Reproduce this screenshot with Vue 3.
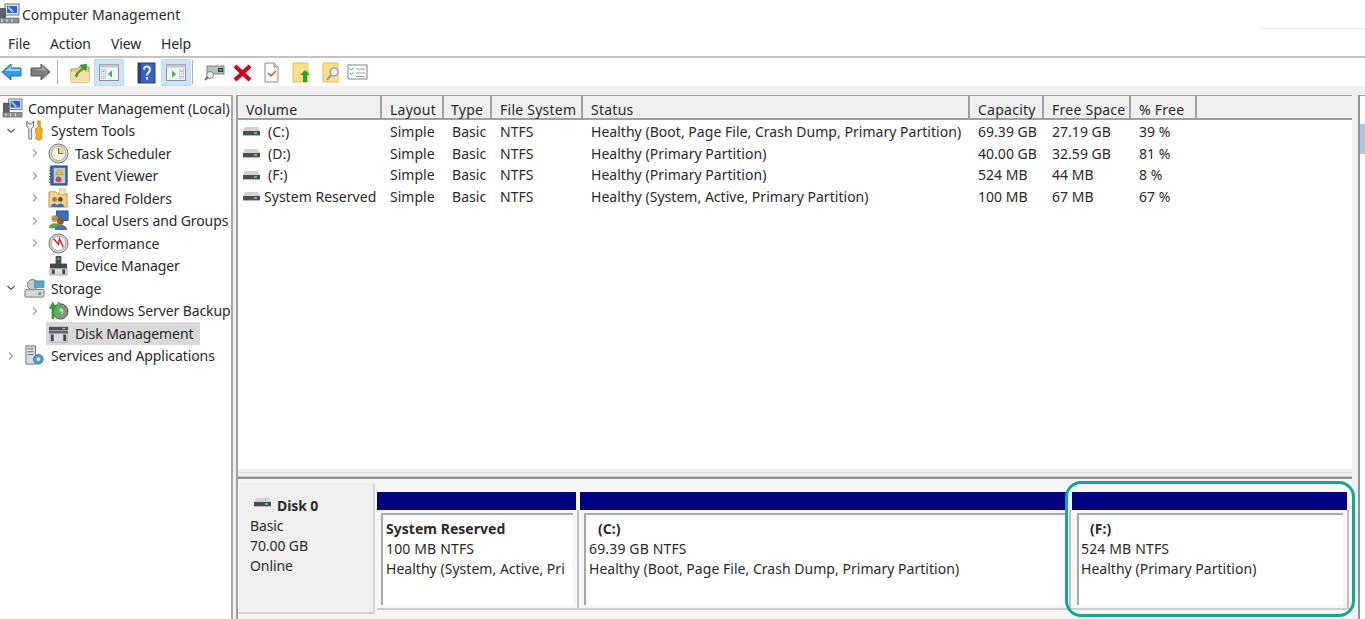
<script setup>
const icons = {
  computer: '<rect x="7" y="1" width="14" height="11" fill="#dfe3ea" stroke="#6d7480"/><rect x="9" y="3" width="10" height="7" fill="#2f62c4"/><path d="M10 4l5 5" stroke="#8fd0f5" stroke-width="2"/><rect x="1" y="5" width="7" height="11" fill="#5a6068"/><rect x="1" y="15" width="20" height="5" fill="#8b9098" stroke="#5a5e66" stroke-width=".6"/><path d="M4 16v3M9 16v3M14 16v3" stroke="#e6e9ee"/>',
  tools: '<path d="M3 1v6l2 2v11h3V9l2-2V1L8 4H5z" fill="#e8eaec" stroke="#6a6f76"/><path d="M14 1h3v6l1 2h1v4l-1 3 1 3-2 2h-3l-2-2 1-3-1-3V9h1l2-2z" fill="#f0b020" stroke="#a87810" stroke-width=".7"/>',
  clock: '<circle cx="11" cy="11" r="10" fill="#d4d5d6" stroke="#77736c"/><circle cx="11" cy="11" r="7.500" fill="#fbf8ee" stroke="#a8a59c"/><path d="M11 4.500a6.500 6.500 0 0 1 6.500 6.500H11z" fill="#f3cf90"/><path d="M11 5v6h5" fill="none" stroke="#8a6a30" stroke-width="1.200"/>',
  viewer: '<rect x="3" y="1" width="17" height="20" fill="#3d68a8" stroke="#27477c"/><path d="M1 3h3M1 6h3M1 9h3M1 12h3M1 15h3M1 18h3" stroke="#555"/><rect x="6" y="3" width="12" height="16" fill="#b9cbe4"/><path d="M12 4l4 6H8z" fill="#f2c230" stroke="#a07a10" stroke-width=".5"/><circle cx="11" cy="15" r="3" fill="#d04a3a"/>',
  shared: '<path d="M1 4h7l2 2h10v14H1z" fill="#f0d48a" stroke="#b8974a"/><path d="M12 1h6v6h-6z" fill="#f9e8b8" stroke="#b8974a" stroke-width=".6"/><circle cx="7" cy="12" r="2.500" fill="#a8744a"/><circle cx="13" cy="12" r="2.500" fill="#6b4a2a"/><path d="M3 20c0-5 7-5 7 0zM9 20c0-5 8-5 8 0z" fill="#3f6fb5"/>',
  users: '<rect x="9" y="1" width="12" height="10" fill="#3b6fc4" stroke="#2a4a85"/><circle cx="7" cy="9" r="3.500" fill="#c28a4e"/><path d="M1 19c0-7 12-7 12 0z" fill="#5fa04a"/><circle cx="13" cy="12" r="3.500" fill="#8a5a30"/><path d="M7 21c0-7 13-7 13 0z" fill="#4a6fb0"/>',
  perf: '<circle cx="11" cy="11" r="10" fill="#d4d5d6" stroke="#77736c"/><circle cx="11" cy="11" r="7.500" fill="#fff" stroke="#a8a59c"/><path d="M6 6l5 6 1-6 4 9" fill="none" stroke="#c6282a" stroke-width="1.500"/>',
  device: '<rect x="8" y="1" width="6" height="9" fill="#4a4e55"/><rect x="10" y="3" width="2" height="2" fill="#5fd05f"/><rect x="2" y="9" width="18" height="5" fill="#44484f"/><rect x="2" y="14" width="18" height="7" fill="#dadcdf" stroke="#80848a" stroke-width=".6"/><rect x="4" y="15" width="3" height="5" fill="#44484f"/><rect x="15" y="15" width="3" height="5" fill="#44484f"/>',
  storage: '<rect x="1" y="12" width="20" height="8" rx="1" fill="#d5d8dc" stroke="#777c84"/><circle cx="9" cy="7" r="5.500" fill="#c6cace" stroke="#777c84"/><rect x="11" y="3" width="10" height="7" fill="#58a7c9" stroke="#3a7e9c" stroke-width=".6"/><rect x="15" y="15" width="3" height="3" fill="#55b055"/>',
  backup: '<circle cx="13" cy="12" r="8" fill="#8b8f85" stroke="#4a4d48"/><circle cx="13" cy="12" r="3" fill="#d6d2c5"/><path d="M5 20V6M2 9l3-5 3 5" fill="none" stroke="#2ca02c" stroke-width="2.500"/><path d="M11 2v13M8 12l3 5 3-5" fill="none" stroke="#46c046" stroke-width="2.200"/>',
  disk: '<rect x="1" y="4" width="20" height="3.500" fill="#4b4f55"/><rect x="15" y="5" width="3" height="1.500" fill="#63e063"/><rect x="1" y="8" width="20" height="3" fill="#63676d"/><rect x="2" y="11" width="18" height="9" fill="#dcdee0" stroke="#888" stroke-width=".5"/><rect x="3" y="12" width="3" height="7" fill="#44484f"/><rect x="16" y="12" width="3" height="7" fill="#44484f"/>',
  services: '<rect x="2" y="1" width="10" height="19" fill="#d9dce0" stroke="#70757c"/><path d="M4 4h6M4 7h6M4 10h6" stroke="#70757c"/><circle cx="15" cy="15" r="5" fill="#5b9bd5" stroke="#3a6f9f"/><circle cx="15" cy="15" r="1.800" fill="#eaf3fb"/>',
  back: '<path d="M1 10l9-8v4h10v8H10v4z" fill="#3a9ae0" stroke="#1d6cb0"/><path d="M4 9l6-5v3h9v2z" fill="#9ad4f8"/>',
  forward: '<path d="M21 10l-9-8v4H2v8h10v4z" fill="#7c7c7c" stroke="#5a5a5a"/><path d="M3 7h10V4l5 5z" fill="#a8a8a8"/>',
  up: '<path d="M2 7h6l2-2h10v15H2z" fill="#ecd088" stroke="#b39345"/><path d="M2 10h18v10H2z" fill="#f4dfa4"/><path d="M6 14c2-5 5-6 7-8l-2-3 7-1-1 7-2-2c-3 2-6 4-7 8z" fill="#3d9b3a" stroke="#2b7a2b" stroke-width=".4"/>',
  paneLeft: '<rect x="1.500" y="2.500" width="19" height="16" fill="#f4f5f6" stroke="#8a8f95"/><rect x="1.500" y="2.500" width="19" height="3" fill="#c3c6ca"/><rect x="3.500" y="7.500" width="4" height="9" fill="#fff" stroke="#a9b9c8" stroke-width=".7"/><path d="M4.500 9.500h2M4.500 12h2M4.500 14.500h2" stroke="#5a9ad0"/><path d="M14 8.500v7l-4-3.500z" fill="#3cae58"/>',
  paneRight: '<rect x="1.500" y="2.500" width="19" height="16" fill="#f4f5f6" stroke="#8a8f95"/><rect x="1.500" y="2.500" width="19" height="3" fill="#c3c6ca"/><rect x="14.500" y="7.500" width="4" height="9" fill="#fff" stroke="#a9b9c8" stroke-width=".7"/><path d="M15.500 9.500h2M15.500 12h2M15.500 14.500h2" stroke="#5a9ad0"/><path d="M7 8.500v7l4-3.500z" fill="#3cae58"/>',
  help: '<rect x="1" y="1" width="17" height="20" fill="#3a62b8" stroke="#25408a"/><rect x="1" y="1" width="3" height="20" fill="#22408c"/><path d="M7 7.500c0-4 6-4 6 0 0 3-3 3-3 6" fill="none" stroke="#e6eeff" stroke-width="2"/><rect x="9" y="15" width="2" height="2.500" fill="#e6eeff"/>',
  connect: '<rect x="3" y="4" width="17" height="8" fill="#b9bfc6" stroke="#7c828a"/><rect x="14" y="6" width="5" height="4" fill="#33373c"/><rect x="15.500" y="7" width="2" height="2" fill="#63e063"/><circle cx="6" cy="13" r="3.500" fill="#e8f1f8" stroke="#7c828a"/><path d="M4 15l-3 3" stroke="#666" stroke-width="2"/>',
  del: '<path d="M3 4l15 14M18 4L3 18" stroke="#d0021b" stroke-width="4.200"/>',
  check: '<path d="M2 1h9l4 4v15H2z" fill="#fff" stroke="#8a8a8a"/><path d="M11 1v4h4" fill="#d8d8d8" stroke="#8a8a8a"/><path d="M5 11l3 3 5-5" fill="none" stroke="#b06a28" stroke-width="1.500"/>',
  yellowUp: '<rect x="1" y="1" width="15" height="19" fill="#fbe08a" stroke="#e8c24e"/><path d="M13 8l5 5h-3v7h-4v-7H8z" fill="#28a428"/>',
  yellowFind: '<rect x="1" y="1" width="15" height="19" fill="#fbe08a" stroke="#e8c24e"/><circle cx="12" cy="10" r="4" fill="#e9f1f8" stroke="#8b9299" stroke-width="1.200"/><path d="M9 13l-4 5" stroke="#8b9299" stroke-width="2"/>',
  list: '<rect x="1" y="3" width="19" height="14" fill="#f8f9fa" stroke="#80868c"/><path d="M3 6.500l1.500 1.500 2-2M3 11l1.500 1.500 2-2" fill="none" stroke="#3a8ad0"/><path d="M9 7h9M9 11h9M9 14.500h9" stroke="#a0a5ab" stroke-width="1.200"/>',
  vol: '<path d="M2 0h13l2 4H0z" fill="#cfd1d3"/><rect x="0" y="4" width="17" height="4" fill="#4a4d52"/><rect x="11" y="5" width="3" height="2" fill="#3fd060"/><rect x="0" y="8" width="17" height="1" fill="#b5b7b9"/>'
}

const toolbar = [
  { icon: 'back', cls: 'tb-back' }, { icon: 'forward', cls: 'tb-fwd' }, { sep: true, cls: 'tb-sep1' },
  { icon: 'up', cls: 'tb-up' }, { icon: 'paneLeft', active: true, cls: 'tb-pl' },
  { icon: 'help', cls: 'tb-help' }, { icon: 'paneRight', active: true, cls: 'tb-pr' }, { sep: true, cls: 'tb-sep2' },
  { icon: 'connect', cls: 'tb-conn' }, { icon: 'del', cls: 'tb-del' }, { icon: 'check', cls: 'tb-check' },
  { icon: 'yellowUp', cls: 'tb-yu' }, { icon: 'yellowFind', cls: 'tb-yf' }, { icon: 'list', cls: 'tb-list' }
]

const tree = [
  { label: 'Computer Management (Local)', icon: 'computer', level: 0 },
  { label: 'System Tools', icon: 'tools', level: 1, chev: 'open' },
  { label: 'Task Scheduler', icon: 'clock', level: 2, chev: 'closed' },
  { label: 'Event Viewer', icon: 'viewer', level: 2, chev: 'closed' },
  { label: 'Shared Folders', icon: 'shared', level: 2, chev: 'closed' },
  { label: 'Local Users and Groups', icon: 'users', level: 2, chev: 'closed' },
  { label: 'Performance', icon: 'perf', level: 2, chev: 'closed' },
  { label: 'Device Manager', icon: 'device', level: 2 },
  { label: 'Storage', icon: 'storage', level: 1, chev: 'open' },
  { label: 'Windows Server Backup', icon: 'backup', level: 2, chev: 'closed' },
  { label: 'Disk Management', icon: 'disk', level: 2, selected: true },
  { label: 'Services and Applications', icon: 'services', level: 1, chev: 'closed' }
]

const headers = ['Volume', 'Layout', 'Type', 'File System', 'Status', 'Capacity', 'Free Space', '% Free']
const rows = [
  ['(C:)', 'Simple', 'Basic', 'NTFS', 'Healthy (Boot, Page File, Crash Dump, Primary Partition)', '69.39 GB', '27.19 GB', '39 %'],
  ['(D:)', 'Simple', 'Basic', 'NTFS', 'Healthy (Primary Partition)', '40.00 GB', '32.59 GB', '81 %'],
  ['(F:)', 'Simple', 'Basic', 'NTFS', 'Healthy (Primary Partition)', '524 MB', '44 MB', '8 %'],
  ['System Reserved', 'Simple', 'Basic', 'NTFS', 'Healthy (System, Active, Primary Partition)', '100 MB', '67 MB', '67 %']
]

const partitions = [
  { name: 'System Reserved', size: '100 MB NTFS', status: 'Healthy (System, Active, Pri', cls: 'p-sys' },
  { name: '(C:)', size: '69.39 GB NTFS', status: 'Healthy (Boot, Page File, Crash Dump, Primary Partition)', cls: 'p-c', indent: true },
  { name: '(F:)', size: '524 MB NTFS', status: 'Healthy (Primary Partition)', cls: 'p-f', indent: true }
]
</script>

<template>
  <div class="app">
    <header class="titlebar">
      <svg class="title-icon" viewBox="0 0 22 22" v-html="icons.computer"></svg>
      <span>Computer Management</span>
      <i class="title-line"></i>
    </header>

    <nav class="menubar">
      <span v-for="m in ['File', 'Action', 'View', 'Help']" :key="m" :class="'m-' + m">{{ m }}</span>
    </nav>

    <div class="toolbar">
      <template v-for="(t, i) in toolbar" :key="i">
        <i v-if="t.sep" class="tb-sep" :class="t.cls"></i>
        <span v-else class="tb-btn" :class="[t.cls, { active: t.active }]">
          <svg viewBox="0 0 22 22" v-html="icons[t.icon]"></svg>
        </span>
      </template>
    </div>
    <div class="strip"></div>

    <main class="main">
      <aside class="tree">
        <div
          v-for="n in tree"
          :key="n.label"
          class="node"
          :class="'lv' + n.level"
        >
          <span class="chev">
            <svg v-if="n.chev === 'open'" viewBox="0 0 10 10"><path d="M1.500 3l3.500 3.500L8.500 3" fill="none" stroke="#555" stroke-width="1.200"/></svg>
            <svg v-else-if="n.chev === 'closed'" viewBox="0 0 10 10"><path d="M3 1.500L6.500 5 3 8.500" fill="none" stroke="#a0a0a0" stroke-width="1.200"/></svg>
          </span>
          <span class="node-body" :class="{ selected: n.selected }">
            <svg class="node-icon" viewBox="0 0 22 22" v-html="icons[n.icon]"></svg>
            <span class="node-label">{{ n.label }}</span>
          </span>
        </div>
      </aside>

      <section class="right">
        <div class="list">
          <div class="row head">
            <span v-for="h in headers" :key="h" class="hcell">{{ h }}</span>
            <span class="hfill"></span>
          </div>
          <div v-for="r in rows" :key="r[0]" class="row data">
            <span class="cell vol">
              <svg class="vol-icon" viewBox="0 0 17 9" v-html="icons.vol"></svg>
              <span :class="{ drive: r[0].startsWith('(') }">{{ r[0] }}</span>
            </span>
            <span v-for="(c, i) in r.slice(1)" :key="i" class="cell">{{ c }}</span>
          </div>
        </div>

        <div class="splitter"></div>

        <div class="disks">
          <div class="disk-info">
            <div class="disk-name">
              <svg class="disk-icon" viewBox="0 0 17 9" v-html="icons.vol"></svg>
              <b>Disk 0</b>
            </div>
            <div>Basic</div>
            <div>70.00 GB</div>
            <div>Online</div>
          </div>
          <div class="parts">
            <div v-for="p in partitions" :key="p.name" class="part" :class="p.cls">
              <div class="part-bar"></div>
              <div class="part-body">
                <div class="part-box">
                  <b :class="{ indent: p.indent }">{{ p.name }}</b>
                  <span class="size">{{ p.size }}</span>
                  <span class="status">{{ p.status }}</span>
                </div>
              </div>
            </div>
          </div>
        </div>
        <div class="highlight"></div>
      </section>

      <aside class="side">
        <div class="side-sel"></div>
      </aside>
    </main>
  </div>
</template>

<style>
html, body { margin: 0; background: #fff; overflow: hidden; }
</style>

<style scoped>
.app {
  width: 1365px;
  height: 619px;
  overflow: hidden;
  display: flex;
  flex-direction: column;
  font-family: "Noto Sans", "Open Sans", sans-serif;
  font-size: 14px;
  color: #2a2a2a;
  background: #fff;
  letter-spacing: -0.1px;
}

.titlebar {
  height: 29px;
  flex: none;
  display: flex;
  align-items: center;
  padding-left: 22px;
  box-sizing: border-box;
  position: relative;
  letter-spacing: 0;
}
.title-icon { position: absolute; left: -2px; top: 3px; width: 22px; height: 22px; }
.title-line { position: absolute; right: 0; bottom: 0; width: 104px; height: 1px; background: #eee; }

.menubar {
  height: 29px;
  flex: none;
  box-sizing: border-box;
  border-bottom: 2px solid #c4c4c4;
  display: flex;
  align-items: center;
  padding: 2px 0 0 8px;
}
.m-File { width: 42px; }
.m-Action { width: 61px; }
.m-View { width: 50px; }

.toolbar {
  height: 28px;
  flex: none;
  display: flex;
  align-items: flex-end;
  background: #fff;
}
.tb-btn { display: flex; align-items: center; justify-content: center; flex: none; height: 27px; width: 22px; box-sizing: border-box; }
.tb-btn svg { width: 22px; height: 22px; }
.tb-btn.active { width: 30px; background: #cce4f7; border: 1px solid #b8dcf5; }
.tb-sep { flex: none; width: 1px; height: 24px; background: #b0b0b0; align-self: center; }
.tb-back { margin-left: 1px; }
.tb-fwd { margin-left: 6px; }
.tb-sep1 { margin-left: 6px; }
.tb-up { margin-left: 11px; }
.tb-pl { margin-left: 3px; }
.tb-help { margin-left: 13px; }
.tb-pr { margin-left: 2px; }
.tb-sep2 { margin-left: 1px; }
.tb-conn { margin-left: 11px; }
.tb-del { margin-left: 6px; }
.tb-check { margin-left: 9px; }
.tb-yu { margin-left: 7px; }
.tb-yf { margin-left: 8px; }
.tb-list { margin-left: 3px; }

.strip { height: 9px; flex: none; background: #f0f0f0; }

.main { flex: 1; min-height: 0; display: flex; background: #f0f0f0; position: relative; }

.tree {
  width: 233px;
  flex: none;
  box-sizing: border-box;
  background: #fff;
  border-top: 1px solid #a0a0a0;
  border-right: 2px solid #a8a8a8;
  padding-top: 1px;
}
.node { height: 22.500px; display: flex; align-items: center; white-space: nowrap; }
.chev { width: 10px; height: 10px; flex: none; display: block; }
.chev svg { display: block; width: 10px; height: 10px; }
.node-body { display: flex; align-items: center; height: 22.500px; }
.node-icon { width: 21px; height: 21px; flex: none; }
.lv0 .chev { display: none; }
.lv0 .node-body { padding-left: 2px; }
.lv0 .node-icon { margin-right: 5px; }
.lv1 .chev { margin-left: 6px; }
.lv1 .node-body { padding-left: 8px; }
.lv1 .node-icon { margin-right: 6px; }
.lv2 .chev { margin-left: 30px; }
.lv2 .node-body { margin-left: 6px; padding: 0 7px 0 2px; }
.lv2 .node-icon { margin-right: 6px; }
.selected { background: #d9d9d9; }

.right {
  width: 1116px;
  margin-left: 3px;
  flex: none;
  display: flex;
  flex-direction: column;
  background: #fff;
  box-sizing: border-box;
  border-left: 2px solid #a0a0a0;
  border-top: 1px solid #a0a0a0;
  position: relative;
}
.list { height: 373px; flex: none; overflow: hidden; }
.row { display: grid; grid-template-columns: 144px 62px 48px 91px 387px 74px 87px 66px 1fr; white-space: nowrap; }
.head { height: 24px; background: #f0f0f0; border-bottom: 2px solid #a0a0a0; box-sizing: border-box; letter-spacing: 0.25px; }
.hcell { padding: 5px 0 0 8px; border-right: 2px solid #a0a0a0; box-sizing: border-box; line-height: 18px; }
.hcell:nth-child(3) { padding-left: 7px; }
.data { height: 21.700px; line-height: 21.700px; letter-spacing: 0.03px; }
.data:nth-child(2) { margin-top: 1px; }
.cell { padding-left: 8px; }
.vol { padding-left: 5px; display: flex; align-items: center; }
.vol-icon { width: 17px; height: 9px; flex: none; margin-right: 4px; }
.drive { padding-left: 4px; }

.splitter {
  height: 10px;
  flex: none;
  background: #f0f0f0;
  border-bottom: 2px solid #8f8f8f;
  box-sizing: border-box;
  padding-top: 3px;
}
.splitter::before {
  content: "";
  display: block;
  height: 5px;
  box-sizing: border-box;
  border-top: 1px solid #dcdcdc;
  border-bottom: 1px solid #cfcfcf;
}
.disks { flex: 1; display: flex; background: #f6f6f6; min-height: 0; padding-top: 4px; }
.disk-info {
  width: 136px;
  height: 131px;
  flex: none;
  margin-left: 1px;
  background: #f0f0f0;
  box-sizing: border-box;
  padding: 12px 0 0 11px;
  line-height: 20px;
  border-right: 2px solid #d8d8d8;
  border-bottom: 2px solid #d0d0d0;
}
.disk-name { display: flex; align-items: center; height: 21px; margin-left: 3px; }
.disk-icon { width: 17px; height: 9px; margin: -6px 6px 0 1px; }
.parts { display: flex; flex: 1; margin-left: 2px; padding-top: 9px; height: 127px; border-bottom: 2px solid #cfcfcf; box-sizing: border-box; }
.part { display: flex; flex-direction: column; flex: none; }
.p-sys { width: 203px; }
.p-c { width: 492px; }
.p-f { width: 277px; }
.part-bar { height: 18px; background: #000080; flex: none; margin-right: 4px; }
.p-f .part-bar { margin-right: 2px; }
.part-body { flex: 1; margin-right: 1px; border-right: 2px solid #c0c0c0; padding-top: 3px; box-sizing: border-box; }
.p-f .part-body { margin-right: 0; }
.part-box {
  margin: 0 4px 0 4px;
  height: 92px;
  background: #fff;
  box-sizing: border-box;
  border-top: 2px solid #a8a8a8;
  border-left: 2px solid #a8a8a8;
  padding: 4px 4px 0 3px;
  display: flex;
  flex-direction: column;
  line-height: 20px;
  white-space: nowrap;
  overflow: hidden;
}
.p-f .part-box { margin-left: 5px; padding-left: 2px; }
.part-box b { font-weight: 700; letter-spacing: 0.03px; }
.part-box .indent { padding-left: 9px; }
.size { letter-spacing: 0.15px; }
.status { letter-spacing: 0.03px; overflow: hidden; }

.highlight {
  position: absolute;
  left: 827px;
  top: 385px;
  width: 290px;
  height: 136px;
  border: 3px solid #10a98e;
  border-radius: 16px;
  box-sizing: border-box;
  pointer-events: none;
}

.side {
  flex: none;
  width: 7px;
  margin-left: 6px;
  background: #fff;
  border-left: 2px solid #909090;
  border-top: 1px solid #a0a0a0;
  box-sizing: border-box;
}
.side-sel { height: 30px; margin-top: 28px; background: #a9c7e4; }
</style>
